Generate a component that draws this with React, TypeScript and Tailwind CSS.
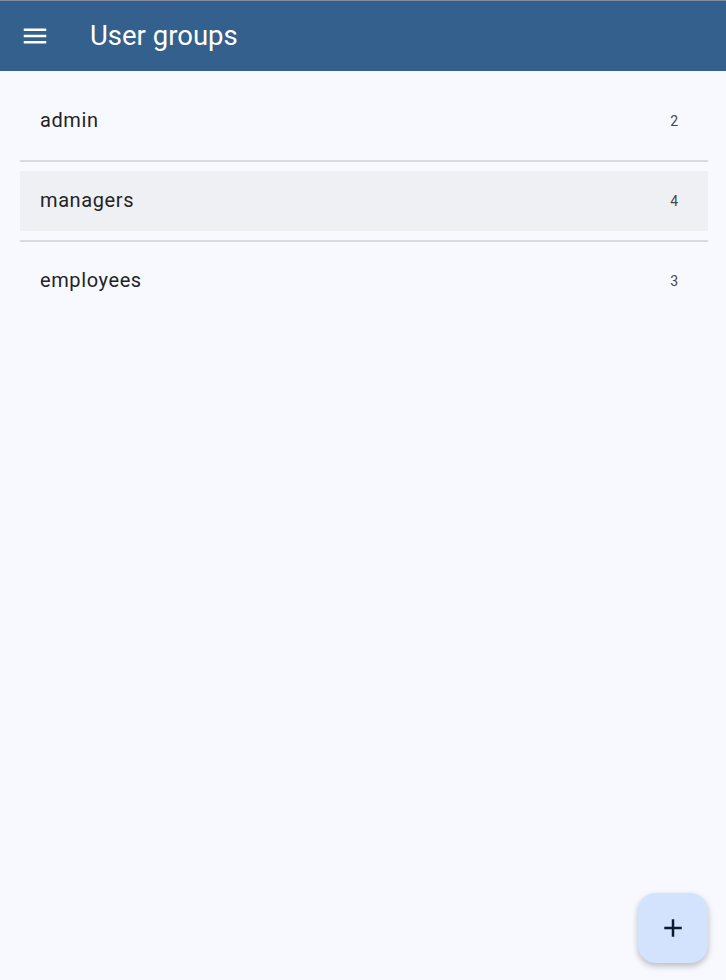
const groups = [
  { name: "admin", count: 2 },
  { name: "managers", count: 4, active: true },
  { name: "employees", count: 3 },
]

function MenuIcon() {
  return (
    <svg width="30" height="30" viewBox="0 0 24 24" fill="white">
      <path d="M3 18h18v-2H3v2zm0-5h18v-2H3v2zm0-7v2h18V6H3z" />
    </svg>
  )
}

export default function App() {
  return (
    <div
      className="relative flex h-[980px] w-[726px] flex-col overflow-hidden bg-[#f8f9ff]"
      style={{ fontFamily: "Roboto, 'Noto Sans', sans-serif" }}
    >
      <header className="flex h-[71px] items-center border-t border-[#7f8fa3] bg-[#33608c] pl-5">
        <button className="flex h-[30px] w-[30px] items-center justify-center">
          <MenuIcon />
        </button>
        <h1 className="ml-10 text-[27.5px] leading-none text-white">User groups</h1>
      </header>

      <ul className="flex flex-col pl-5 pr-[18px] pt-[20px]">
        {groups.map((g, i) => (
          <li key={g.name}>
            {i > 0 && <div className="my-[9px] h-[2px] bg-[#d9dbe1]" />}
            <div
              className={`flex h-[60px] items-center justify-between pl-5 pr-[30px] ${
                g.active ? "bg-[#eff0f4]" : ""
              }`}
            >
              <span className="pb-[2px] text-[20px] leading-none tracking-[0.6px] text-[#222328]">
                {g.name}
              </span>
              <span className="text-[14px] leading-none text-[#45474d]">{g.count}</span>
            </div>
          </li>
        ))}
      </ul>

      <button className="absolute bottom-[17px] right-[18px] flex h-[70px] w-[70px] items-center justify-center rounded-[18px] bg-[#d3e3fd] shadow-[0_3px_6px_rgba(0,0,0,0.25)]">
        <svg width="30" height="30" viewBox="0 0 24 24" fill="#0b1d30">
          <path d="M19 13h-6v6h-2v-6H5v-2h6V5h2v6h6v2z" />
        </svg>
      </button>
    </div>
  )
}
